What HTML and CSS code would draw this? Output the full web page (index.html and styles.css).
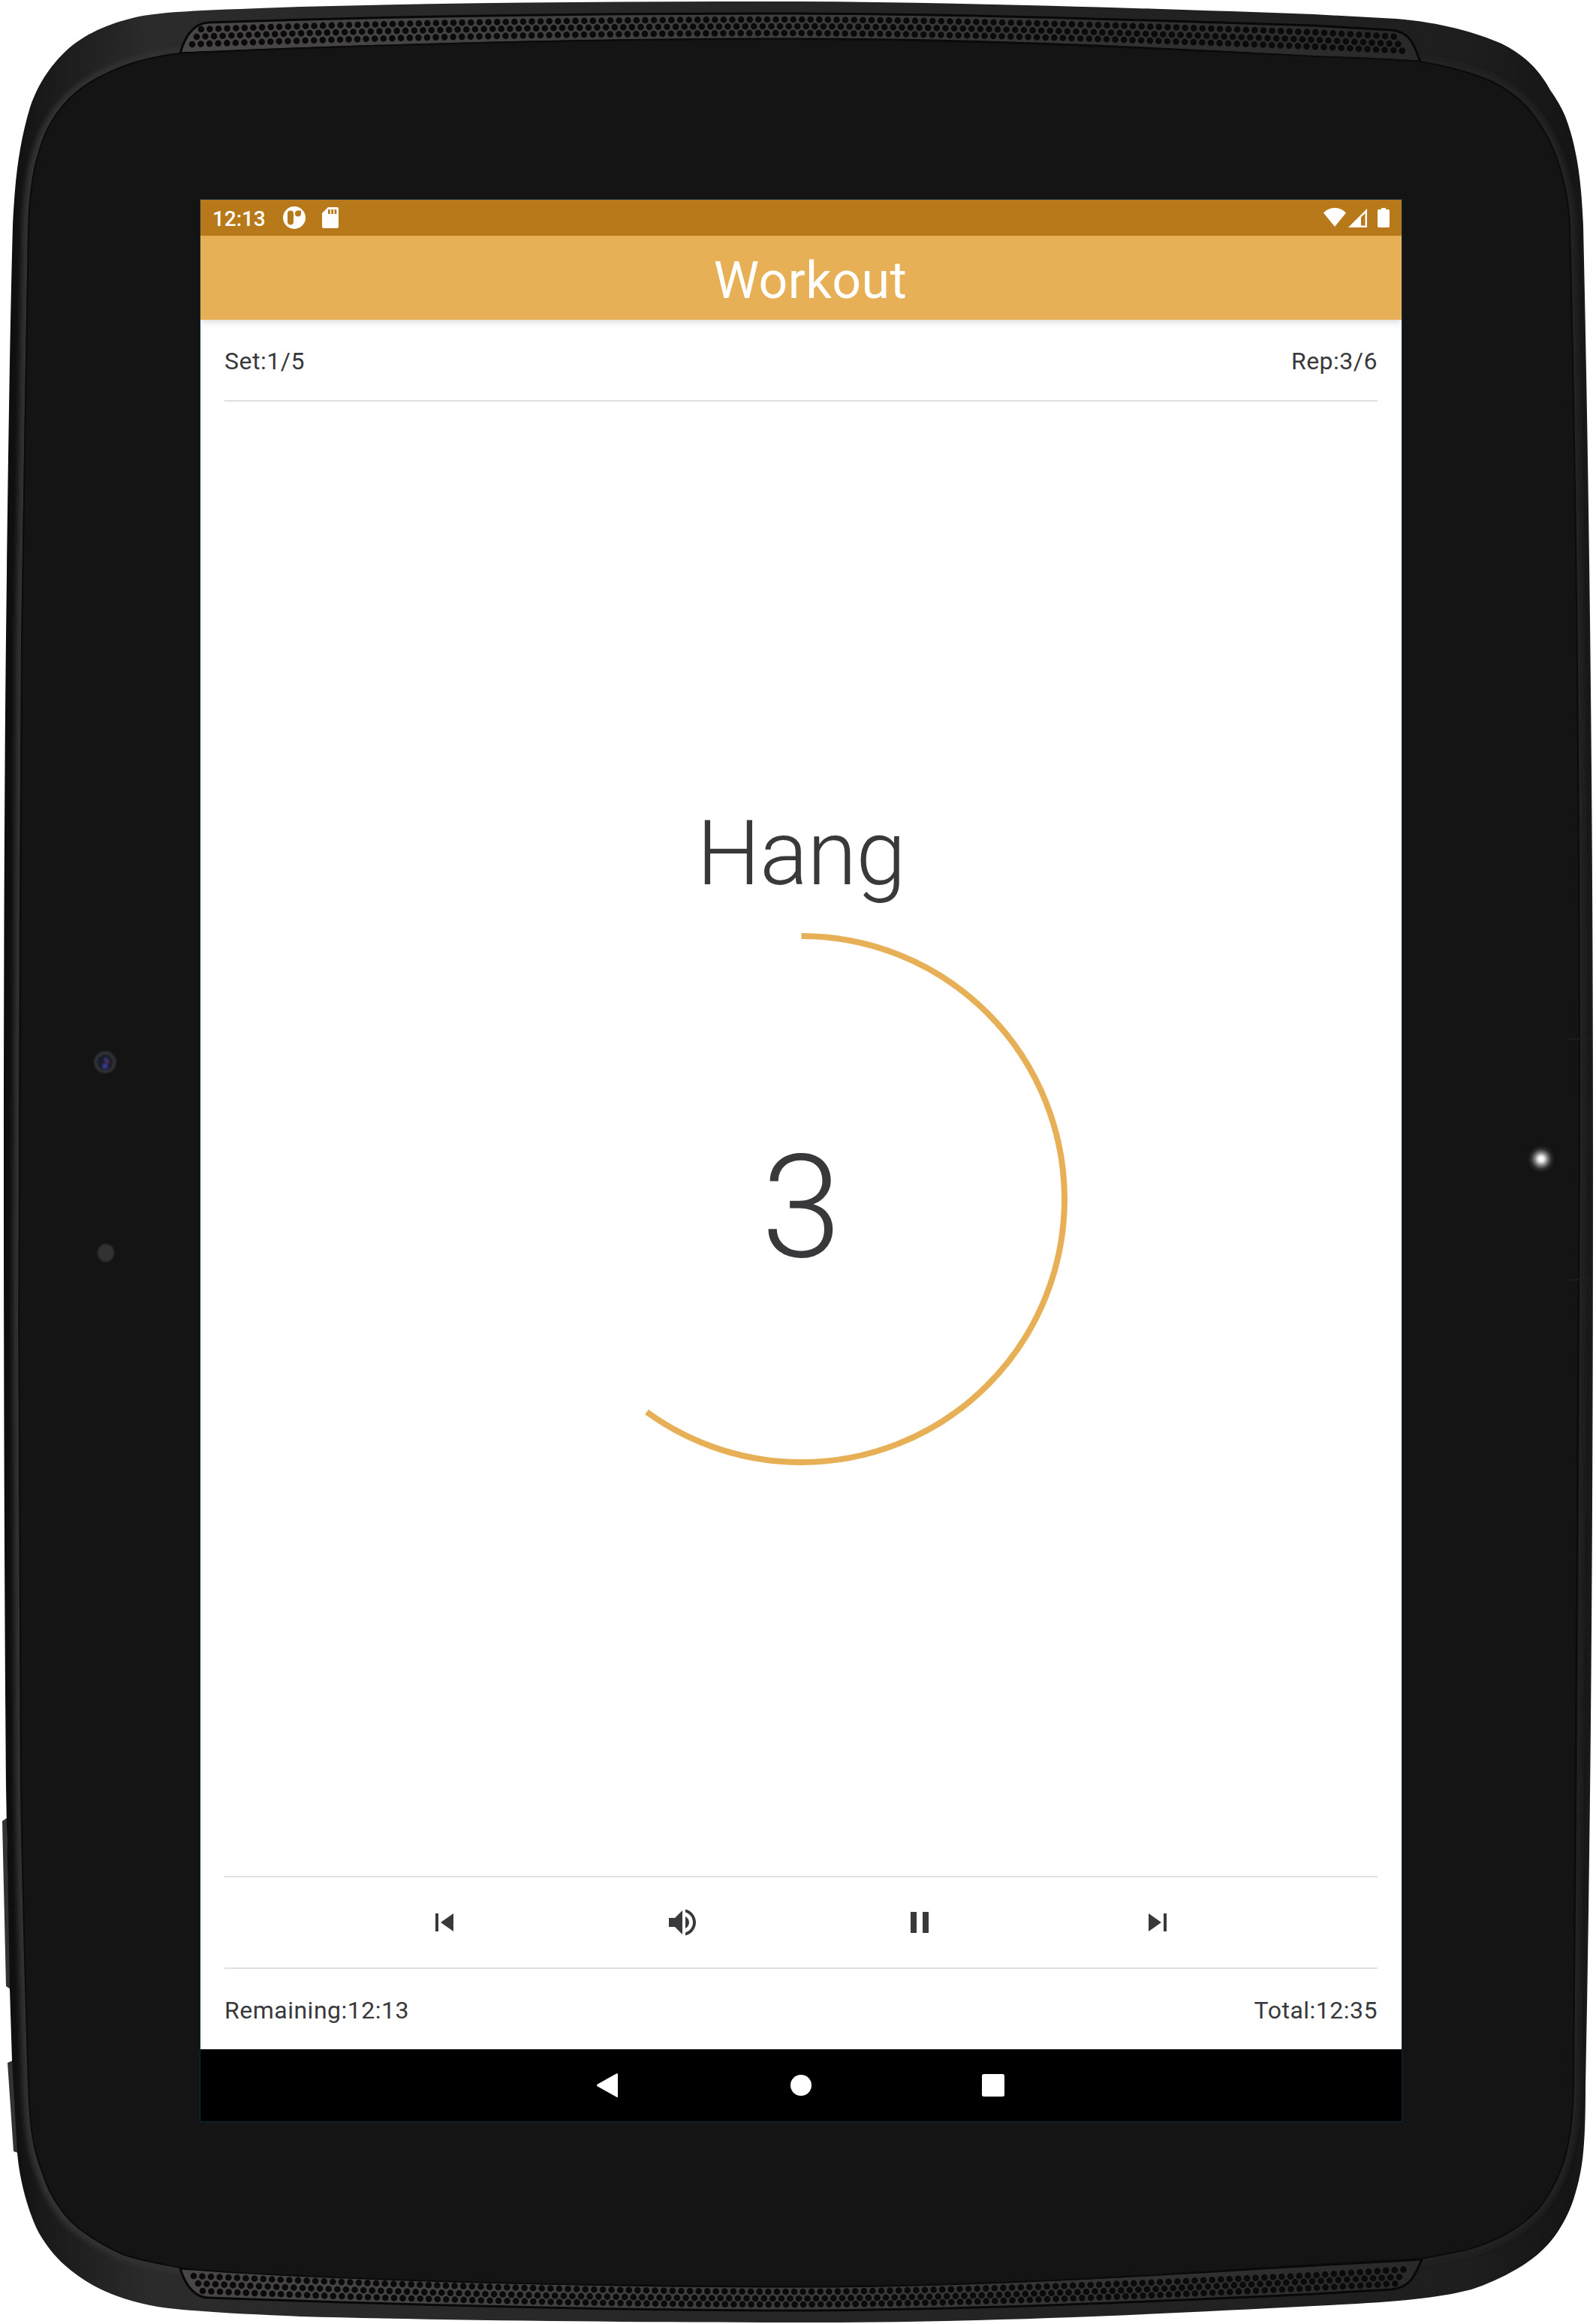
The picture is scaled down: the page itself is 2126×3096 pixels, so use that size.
FILE: index.html
```html
<!DOCTYPE html>
<html lang="en">
<head>
<meta charset="utf-8">
<title>Workout</title>
<link rel="stylesheet" href="styles.css">
</head>
<body>
<div class="tablet">
  <svg class="shell" viewBox="0 0 2126 3096" aria-hidden="true">
    <defs>
      <linearGradient id="rim" x1="0" y1="0" x2="1" y2="0">
        <stop offset="0" stop-color="#0c0c0c"/>
        <stop offset=".02" stop-color="#181818"/>
        <stop offset=".09" stop-color="#2c2b2b"/>
        <stop offset=".5" stop-color="#262626"/>
        <stop offset=".92" stop-color="#1e1e1e"/>
        <stop offset=".985" stop-color="#151515"/>
        <stop offset="1" stop-color="#1a1a1a"/>
      </linearGradient>
      <linearGradient id="mesh" x1="0" y1="0" x2="1" y2="0">
        <stop offset="0" stop-color="#4a4647"/>
        <stop offset=".5" stop-color="#3d3b3b"/>
        <stop offset="1" stop-color="#292929"/>
      </linearGradient>
      <linearGradient id="edge" x1="0" y1="0" x2="1" y2="0">
        <stop offset="0" stop-color="#323232"/>
        <stop offset="1" stop-color="#222"/>
      </linearGradient>
      <radialGradient id="led">
        <stop offset="0" stop-color="#fff"/>
        <stop offset=".2" stop-color="#eee"/>
        <stop offset=".5" stop-color="#777"/>
        <stop offset=".75" stop-color="#2c2c2c"/>
        <stop offset="1" stop-color="#141414"/>
      </radialGradient>
      <filter id="soft" x="-5%" y="-5%" width="110%" height="110%"><feGaussianBlur stdDeviation="3"/></filter>
      <filter id="fine" x="-20%" y="-20%" width="140%" height="140%"><feGaussianBlur stdDeviation="1"/></filter>
      <clipPath id="bodyClip"><use href="#body"/></clipPath>
    </defs>
    <path fill="#333" d="M3 2426L9 2422L14 2650L8 2646z M10 2748L17 2745L24 2868L18 2866z"/>
    <path id="body" fill="url(#rim)" d="M17 300C20 235 26 190 40 143C52 108 70 84 92 64C118 42 150 30 185 22C225 14 300 13 400 9C620 3 850 2 1063 2C1300 3 1550 12 1750 19L1860 25C1920 30 1965 43 2000 58C2016 66 2029 75 2040 86C2050 96 2058 107 2065 120C2073 131 2080 143 2085 155C2090 168 2094 181 2097 195C2105 230 2107 262 2109 300C2118 700 2122 1100 2122 1540C2122 1980 2120 2380 2112 2780C2112 2850 2109 2880 2103 2905C2099 2921 2095 2936 2088 2950C2081 2965 2072 2979 2062 2990C2050 3003 2036 3014 2020 3023C2001 3034 1981 3043 1960 3050C1910 3063 1850 3067 1750 3072C1500 3085 1300 3094 1063 3094C850 3094 600 3091 400 3086C330 3083 260 3080 210 3073C160 3064 125 3049 95 3025C77 3011 63 2994 52 2975C38 2948 26 2905 23 2868L16 2745L13 2650L8 2380C4 1900 4 1200 8 850C11 600 13 450 17 300z"/>
    <g clip-path="url(#bodyClip)">
      <path fill="none" stroke="url(#edge)" stroke-width="12" filter="url(#soft)" d="M36 300C37 270 40 243 45 220C50 200 56 180 65 165C85 130 110 112 140 97C170 82 205 74 240 70C500 57 800 50 1063 50C1300 51 1550 63 1750 73C1830 76 1865 77 1890 80C1935 87 1965 96 1990 107C2017 121 2033 135 2045 152C2065 178 2076 205 2083 235C2090 260 2092 280 2093 300C2103 700 2106 1100 2106 1540C2106 1980 2104 2380 2098 2780C2097 2815 2095 2838 2090 2860C2084 2890 2070 2920 2050 2945C2025 2972 1990 2990 1950 3000L1894 3011L1750 3019C1500 3036 1300 3048 1063 3048C850 3048 600 3043 400 3034C340 3031 280 3029 240 3023C210 3017 180 3012 160 3004C140 2995 125 2986 110 2975C96 2966 85 2954 77 2942C67 2928 60 2914 56 2900C48 2880 44 2865 42 2850C38 2830 37 2805 36 2780C32 2650 28 2520 26 2380C22 1900 22 1200 27 850C29 650 32 450 36 300z"/>
    </g>
    <g>
      <path fill="url(#mesh)" stroke="#080808" stroke-width="3" d="M240 71C247 46 260 31 278 30C500 22 800 18 1063 18C1300 19 1560 28 1750 34L1853 40C1880 43 1883 60 1892 82L1750 76C1550 64 1300 52 1063 52C800 52 500 60 240 71z"/>
      <path fill="url(#mesh)" stroke="#080808" stroke-width="3" d="M240 3022C247 3045 260 3061 278 3061C500 3069 800 3078 1063 3078C1300 3077 1560 3065 1750 3056L1853 3050C1880 3047 1885 3030 1894 3010L1750 3018C1550 3030 1300 3046 1063 3046C800 3046 500 3038 240 3022z"/>
      <g fill="none" stroke="#0a0a0a" stroke-width="8.6" stroke-linecap="round" stroke-dasharray="0 11.6">
        <path d="M268 39C500 31 800 26 1063 26C1300 27 1560 36 1750 43L1862 49"/>
        <path d="M262 49C500 40 800 35 1063 35C1300 36 1560 46 1750 53L1870 59"/>
        <path d="M256 59C500 50 800 44 1063 44C1300 45 1560 55 1750 62L1876 68"/>
        <path d="M258 3032C500 3043 800 3053 1063 3053C1300 3052 1560 3040 1750 3031L1876 3023"/>
        <path d="M264 3042C500 3053 800 3062 1063 3062C1300 3061 1560 3049 1750 3039L1870 3033"/>
        <path d="M270 3052C500 3062 800 3070 1063 3070C1300 3069 1560 3057 1750 3048L1862 3042"/>
      </g>
    </g>
    <path fill="#141414" stroke="#0b0b0b" stroke-width="2" d="M38 300C39 270 42 243 47 220C52 200 58 180 67 165C87 130 112 112 142 98C172 83 205 75 240 71C500 59 800 52 1063 52C1300 53 1550 65 1750 75C1830 78 1865 79 1890 82C1935 89 1963 98 1988 109C2015 123 2031 137 2043 154C2063 180 2074 207 2081 235C2088 260 2090 280 2091 300C2101 700 2104 1100 2104 1540C2104 1980 2102 2380 2096 2780C2095 2815 2093 2838 2088 2860C2082 2890 2068 2919 2048 2944C2023 2970 1989 2988 1950 2998L1894 3009L1750 3017C1500 3034 1300 3046 1063 3046C850 3046 600 3041 400 3032C340 3029 280 3027 240 3021C210 3015 180 3010 161 3002C141 2993 126 2984 111 2973C98 2964 87 2952 79 2940C69 2926 62 2912 58 2898C50 2878 46 2863 44 2849C40 2829 39 2805 38 2780C34 2650 30 2520 28 2380C24 1900 24 1200 29 850C31 650 34 450 38 300z"/>
    <g filter="url(#fine)">
      <circle cx="140" cy="1415" r="12.5" fill="#1b1d2b" stroke="#2e3036" stroke-width="4.5"/>
      <circle cx="141" cy="1412" r="3" fill="#34356e"/>
      <circle cx="140" cy="1420" r="3.500" fill="#363c88"/>
      <circle cx="144" cy="1415" r="2" fill="#5a2c48"/>
      <ellipse cx="141" cy="1669" rx="11" ry="12" fill="#333132"/>
    </g>
    <circle cx="2053" cy="1544" r="18" fill="url(#led)"/>
    <path stroke="#1d1d1d" stroke-width="2" d="M2088 1384h32M2090 1705h30"/>
  </svg>

  <main class="screen">
    <header class="status-bar">
      <span class="clock">12:13</span>
      <svg class="status-icon app-icon" viewBox="0 0 30 30"><path fill="#fff" fill-rule="evenodd" d="M15 0a15 15 0 1 1 0 30a15 15 0 0 1 0-30zM10 5.500a4 4 0 0 0-4 4v11a4 4 0 0 0 8 0v-11a4 4 0 0 0-4-4zM16 9.500a4 4 0 1 0 8 0v-4h-4a4 4 0 0 0-4 4z"/></svg>
      <svg class="status-icon card-icon" viewBox="0 0 22 28"><path fill="#fff" fill-rule="evenodd" d="M8 0h12a2 2 0 0 1 2 2v24a2 2 0 0 1-2 2h-18a2 2 0 0 1-2-2v-18zM8 3v6h2.700v-6zM12.300 3v6h2.700v-6zM16.600 3v6h2.700v-6z"/></svg>
      <span class="spacer"></span>
      <svg class="status-icon wifi-icon" viewBox="0 0 30 25"><path fill="#fff" d="M15 25L0 6.500C8.500-2.200 21.500-2.200 30 6.500z"/></svg>
      <svg class="status-icon signal-icon" viewBox="0 0 25 25"><path fill="#fff" fill-rule="evenodd" d="M25 0v25h-25zM22.500 6l-5.500 5.500v11h5.500z"/></svg>
      <svg class="status-icon battery-icon" viewBox="0 0 16 26"><path fill="#fff" d="M5 0h6v2h3.500a1.500 1.500 0 0 1 1.500 1.500v21a1.500 1.500 0 0 1-1.500 1.500h-13a1.500 1.500 0 0 1-1.500-1.500v-21a1.500 1.500 0 0 1 1.500-1.500h3.500z"/></svg>
    </header>
    <div class="app-bar"><h1 class="title">Workout</h1></div>
    <div class="content">
      <div class="row row-top"><span>Set:1/5</span><span>Rep:3/6</span></div>
      <section class="stage">
        <h2 class="phase">Hang</h2>
        <div class="ring">
          <svg class="ring-arc" viewBox="0 0 710 710"><circle cx="355.500" cy="354.500" r="350.500" fill="none" stroke="#e7b056" stroke-width="8" pathLength="100" stroke-dasharray="60 100" transform="rotate(-90 355.500 354.500)"/></svg>
          <span class="count">3</span>
        </div>
      </section>
      <div class="controls">
        <svg class="control" viewBox="0 0 24 24"><path d="M6 6h2v12H6zm3.500 6l8.500 6V6z"/></svg>
        <svg class="control" viewBox="0 0 24 24"><path d="M3 9v6h4l5 5V4L7 9H3zm13.500 3c0-1.770-1.020-3.290-2.500-4.030v8.050c1.480-.73 2.500-2.250 2.500-4.020zM14 3.230v2.060c2.890.86 5 3.540 5 6.710s-2.110 5.850-5 6.710v2.060c4.010-.91 7-4.490 7-8.770s-2.990-7.860-7-8.770z"/></svg>
        <svg class="control" viewBox="0 0 24 24"><path d="M6 19h4V5H6v14zm8-14v14h4V5h-4z"/></svg>
        <svg class="control" viewBox="0 0 24 24"><path d="M6 18l8.500-6L6 6v12zM16 6v12h2V6h-2z"/></svg>
      </div>
      <div class="row row-bottom"><span>Remaining:12:13</span><span>Total:12:35</span></div>
    </div>
    <nav class="nav-bar">
      <svg class="nav-icon" viewBox="0 0 40 40"><path fill="#fff" d="M32 5.500v29q0 2.500-2 1L5 21.500q-2-1.500 0-3L30 4.500q2-1 2 1z"/></svg>
      <svg class="nav-icon" viewBox="0 0 40 40"><circle cx="20" cy="20" r="14" fill="#fff"/></svg>
      <svg class="nav-icon" viewBox="0 0 40 40"><rect x="5" y="5" width="30" height="30" rx="2.500" fill="#fff"/></svg>
    </nav>
  </main>
</div>
</body>
</html>
```
FILE: styles.css
```css
* { box-sizing: border-box; }
body { margin: 0; background: #fff; font-family: Roboto, sans-serif; color: #39393b; }
.tablet { position: relative; width: 2126px; height: 3096px; padding: 266px 259px 270px 267px; overflow: hidden; }
.shell { position: absolute; top: 0; left: 0; width: 2126px; height: 3096px; }
.screen { position: relative; display: flex; flex-direction: column; width: 1600px; height: 2560px; background: #fff; box-shadow: 0 0 0 1px #0a2c40; }

.status-bar { display: flex; align-items: flex-start; height: 48px; padding: 0 16px; background: #b77919; color: #fff; }
.clock { width: 94px; font-size: 28px; font-weight: 500; line-height: 52px; letter-spacing: -.1px; }
.status-icon { flex: none; display: block; }
.app-icon { width: 30px; height: 30px; margin: 9px 22px 0 0; }
.card-icon { width: 22px; height: 28px; margin-top: 10px; }
.spacer { flex: 1; }
.wifi-icon { width: 30px; height: 25px; margin: 11px 3px 0 0; }
.signal-icon { width: 25px; height: 25px; margin: 12px 14px 0 0; }
.battery-icon { width: 16px; height: 26px; margin-top: 11px; }

.app-bar { position: relative; display: flex; justify-content: center; height: 112px; padding-left: 25px; background: #e7b056; box-shadow: 0 2px 10px rgba(0, 0, 0, .18); clip-path: inset(0 0 -20px 0); }
.title { margin: 0; font-size: 68px; font-weight: 400; line-height: 121px; letter-spacing: .5px; color: #fff; }

.content { display: flex; flex-direction: column; flex: 1; padding: 0 32px; }
.row { display: flex; justify-content: space-between; font-size: 32px; letter-spacing: .5px; }
.row-top { height: 109px; line-height: 110px; border-bottom: 2px solid #e0e0e0; }
.row-bottom { height: 107px; line-height: 110px; }

.stage { display: flex; flex-direction: column; align-items: center; flex: 1; padding-top: 532px; }
.phase { margin: 0 0 35px; font-size: 120px; font-weight: 300; line-height: 141px; letter-spacing: -1px; }
.ring { display: grid; place-items: center; width: 710px; height: 710px; }
.ring-arc, .count { grid-area: 1 / 1; }
.ring-arc { width: 710px; height: 710px; }
.count { padding: 20px 2px 0 0; font-size: 192px; font-weight: 300; line-height: 225px; letter-spacing: -3px; }

.controls { display: flex; justify-content: space-evenly; align-items: center; height: 124px; border-top: 2px solid #e0e0e0; border-bottom: 2px solid #e0e0e0; }
.control { width: 48px; height: 48px; fill: #39393b; }

.nav-bar { display: flex; justify-content: center; align-items: center; gap: 216px; height: 96px; background: #000; }
.nav-icon { width: 40px; height: 40px; }
```
